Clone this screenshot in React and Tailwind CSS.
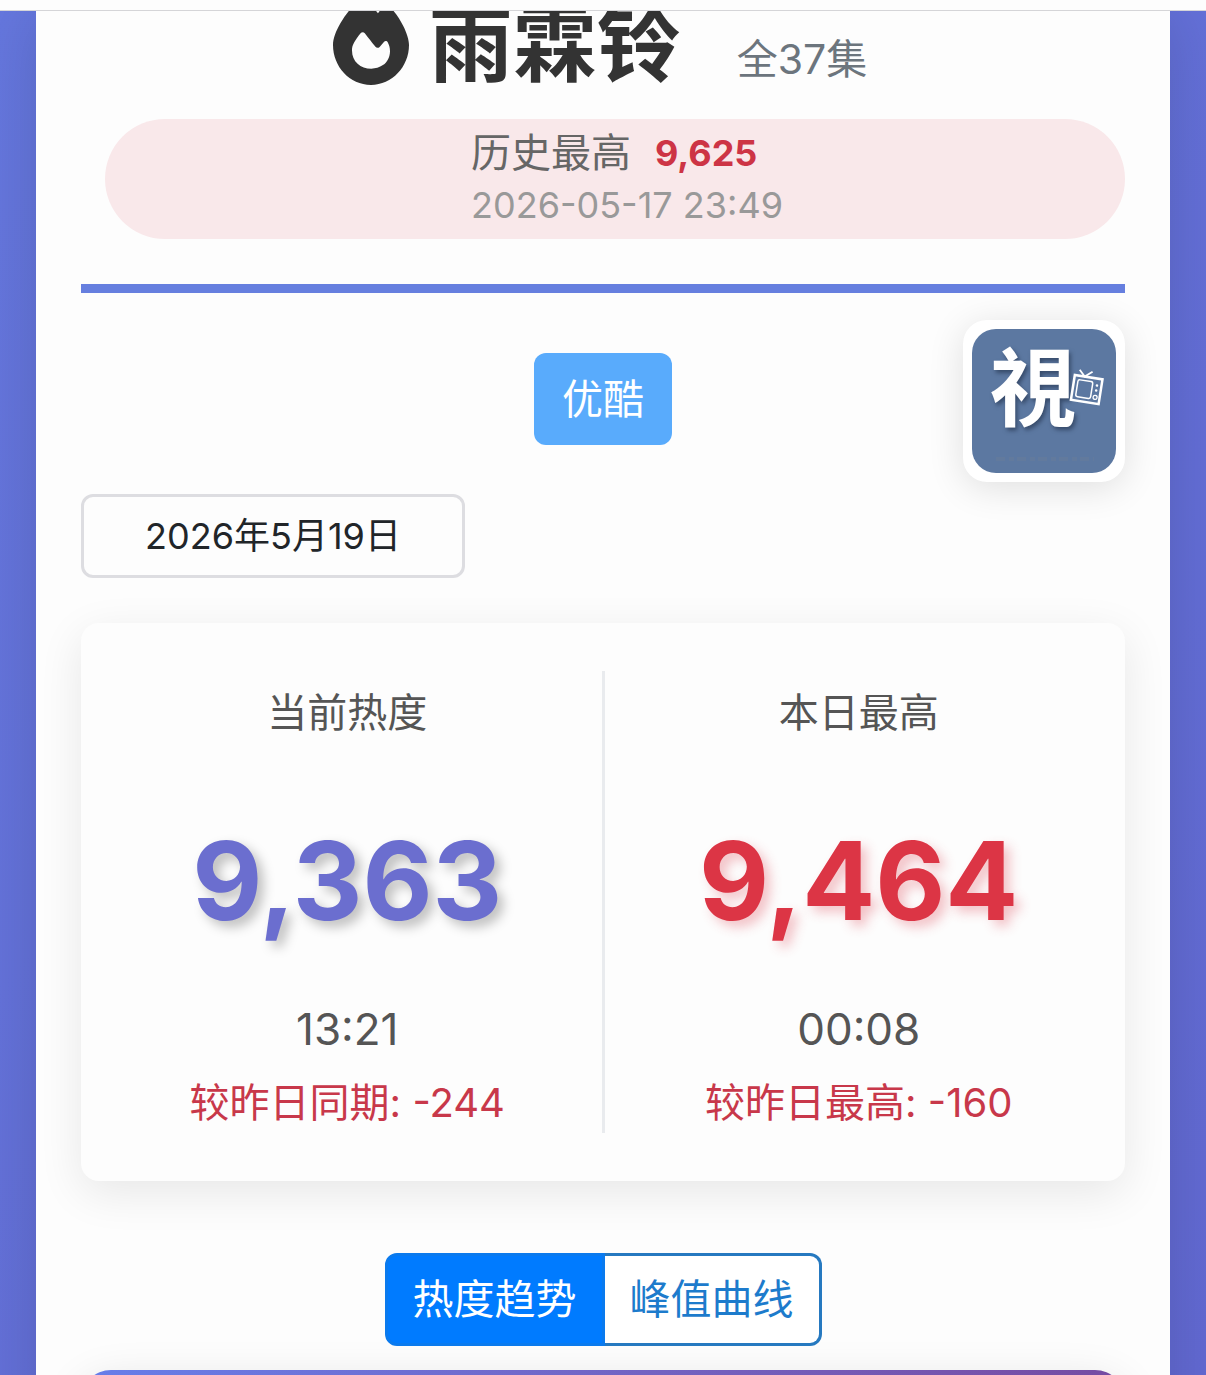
import { useState } from 'react'
import { FaFire } from 'react-icons/fa6'

const STATS = [
  {
    label: '当前热度',
    value: '9,363',
    time: '13:21',
    diff: '较昨日同期: -244',
    valueClass: 'text-[#6b6ecf] [text-shadow:6px_6px_12px_rgba(0,0,0,0.25)]',
  },
  {
    label: '本日最高',
    value: '9,464',
    time: '00:08',
    diff: '较昨日最高: -160',
    valueClass: 'text-[#dc3545] [text-shadow:6px_6px_12px_rgba(220,53,69,0.3)]',
  },
]

const TABS = ['热度趋势', '峰值曲线']

function ChannelLogo() {
  return (
    <svg viewBox="0 0 144 144" className="block w-36 h-36 overflow-visible rounded-3xl bg-[#5c78a1]" role="img" aria-label="視">
      <g className="[filter:drop-shadow(2px_3px_2px_rgba(30,45,70,0.6))]">
        <text x="18" y="91" fontSize="86" fontWeight="700" fill="#fff"
          fontFamily="'Noto Sans CJK TC', sans-serif">視</text>
      </g>
      {/* small tv set */}
      <g transform="translate(103 45) rotate(9)">
        <rect x="0" y="1" width="28" height="25" fill="#5c78a1" stroke="#fff" strokeWidth="2.5" />
        <rect x="4" y="5" width="15" height="17" rx="2" fill="none" stroke="#fff" strokeWidth="1.5" />
        <circle cx="23.5" cy="8" r="1.3" fill="#fff" />
        <circle cx="23.5" cy="13" r="1.3" fill="#fff" />
        <circle cx="23.5" cy="20" r="2" fill="none" stroke="#fff" strokeWidth="1.3" />
        <path d="M4 -5 10 1 17 -5" fill="none" stroke="#fff" strokeWidth="1.8" />
      </g>
      <path d="M24 130h98" stroke="#6f7f96" strokeWidth="4" strokeDasharray="9 4 5 3" opacity="0.35" />
    </svg>
  )
}

function Stat({ label, value, time, diff, valueClass }) {
  return (
    <div className="flex-1 flex flex-col items-center pt-[18px] pb-[6px]">
      <div className="text-[40px] leading-12 text-[#555]">{label}</div>
      <div className={`mt-18 text-[108px] leading-36 font-bold ${valueClass}`}>{value}</div>
      <div className="mt-12 text-[44px] leading-14 text-[#555]">{time}</div>
      <div className="mt-[22px] text-[40px] leading-12 text-[#c8384a]">{diff}</div>
    </div>
  )
}

export default function App() {
  const [date, setDate] = useState('2026年5月19日')
  const [tab, setTab] = useState(0)

  return (
    <div className="h-screen overflow-hidden flex flex-col bg-linear-to-br from-[#6577de] to-[#6269d2] font-['Inter','Noto_Sans_CJK_SC',sans-serif]">
      <div className="h-[11px] shrink-0 bg-[#fdfdfd] border-b border-[#d5d5d8]" />

      <div className="flex-1 min-h-0 overflow-hidden px-9">
        <main className="min-h-full bg-[#fdfdfd] px-[45px] shadow-[0_0_60px_rgba(0,0,0,0.14)]">
          <header className="flow-root">
            <div className="-mt-[13px] pr-1.5 flex items-end justify-center">
              <h1 className="flex items-start gap-5 text-[84px] leading-[93px] font-bold text-[#333]">
                <FaFire className="w-[76px] h-[87px]" />
                <span>雨霖铃</span>
              </h1>
              <span className="ml-14 text-[41px] leading-16 text-[#6c757d]">全37集</span>
            </div>

            <div className="mt-7 ml-6 pl-6 h-30 rounded-full bg-[#f9e8ea] flex justify-center items-center">
              <div>
                <div className="flex items-center gap-6 leading-13">
                  <span className="text-[40px] text-[#666]">历史最高</span>
                  <span className="text-[36px] font-bold text-[#cd3445]">9,625</span>
                </div>
                <div className="text-[36px] leading-13 text-[#999]">2026-05-17 23:49</div>
              </div>
            </div>
          </header>

          <hr className="mt-[45px] border-0 h-[9px] bg-[#667fdf]" />

          <div className="mt-[27px] grid grid-cols-[1fr_auto_1fr] items-center">
            <span className="col-start-2 mb-1 rounded-xl bg-[#59abfc] px-7 py-4 text-[41px] leading-15 text-white">优酷</span>
            <div className="justify-self-end rounded-3xl bg-white p-[9px] shadow-[0_6px_36px_rgba(0,0,0,0.12)]">
              <ChannelLogo />
            </div>
          </div>

          <input
            type="text"
            aria-label="日期"
            value={date}
            onChange={e => setDate(e.target.value)}
            className="mt-3 block w-96 h-21 pb-1.5 rounded-xl border-3 border-[#dddde1] bg-[#fdfdfd] text-center text-[36px] text-[#212529] focus:outline-none focus:border-blue-500"
          />

          <section className="mt-[45px] flex rounded-[18px] bg-[#fdfdfd] px-3 py-12 shadow-[0_12px_45px_rgba(0,0,0,0.09)]">
            <Stat {...STATS[0]} />
            <div className="w-[3px] bg-[#e9ebee]" />
            <Stat {...STATS[1]} />
          </section>

          <div className="mt-18 flex justify-center">
            {TABS.map((t, i) => (
              <button
                key={t}
                onClick={() => setTab(i)}
                className={`h-[93px] px-[25px] border-3 text-[41px] first:rounded-l-xl last:rounded-r-xl last:border-l-0 ${tab === i ? 'bg-[#007bff] border-[#0a7aee] text-white' : 'bg-white border-[#2679c0] text-[#1d7bcc]'}`}
              >
                {t}
              </button>
            ))}
          </div>

          <section className="mt-6 h-60 rounded-[30px] bg-linear-to-r from-[#667eea] to-[#764ba2] shadow-[0_12px_45px_rgba(0,0,0,0.12)]" />
        </main>
      </div>
    </div>
  )
}
